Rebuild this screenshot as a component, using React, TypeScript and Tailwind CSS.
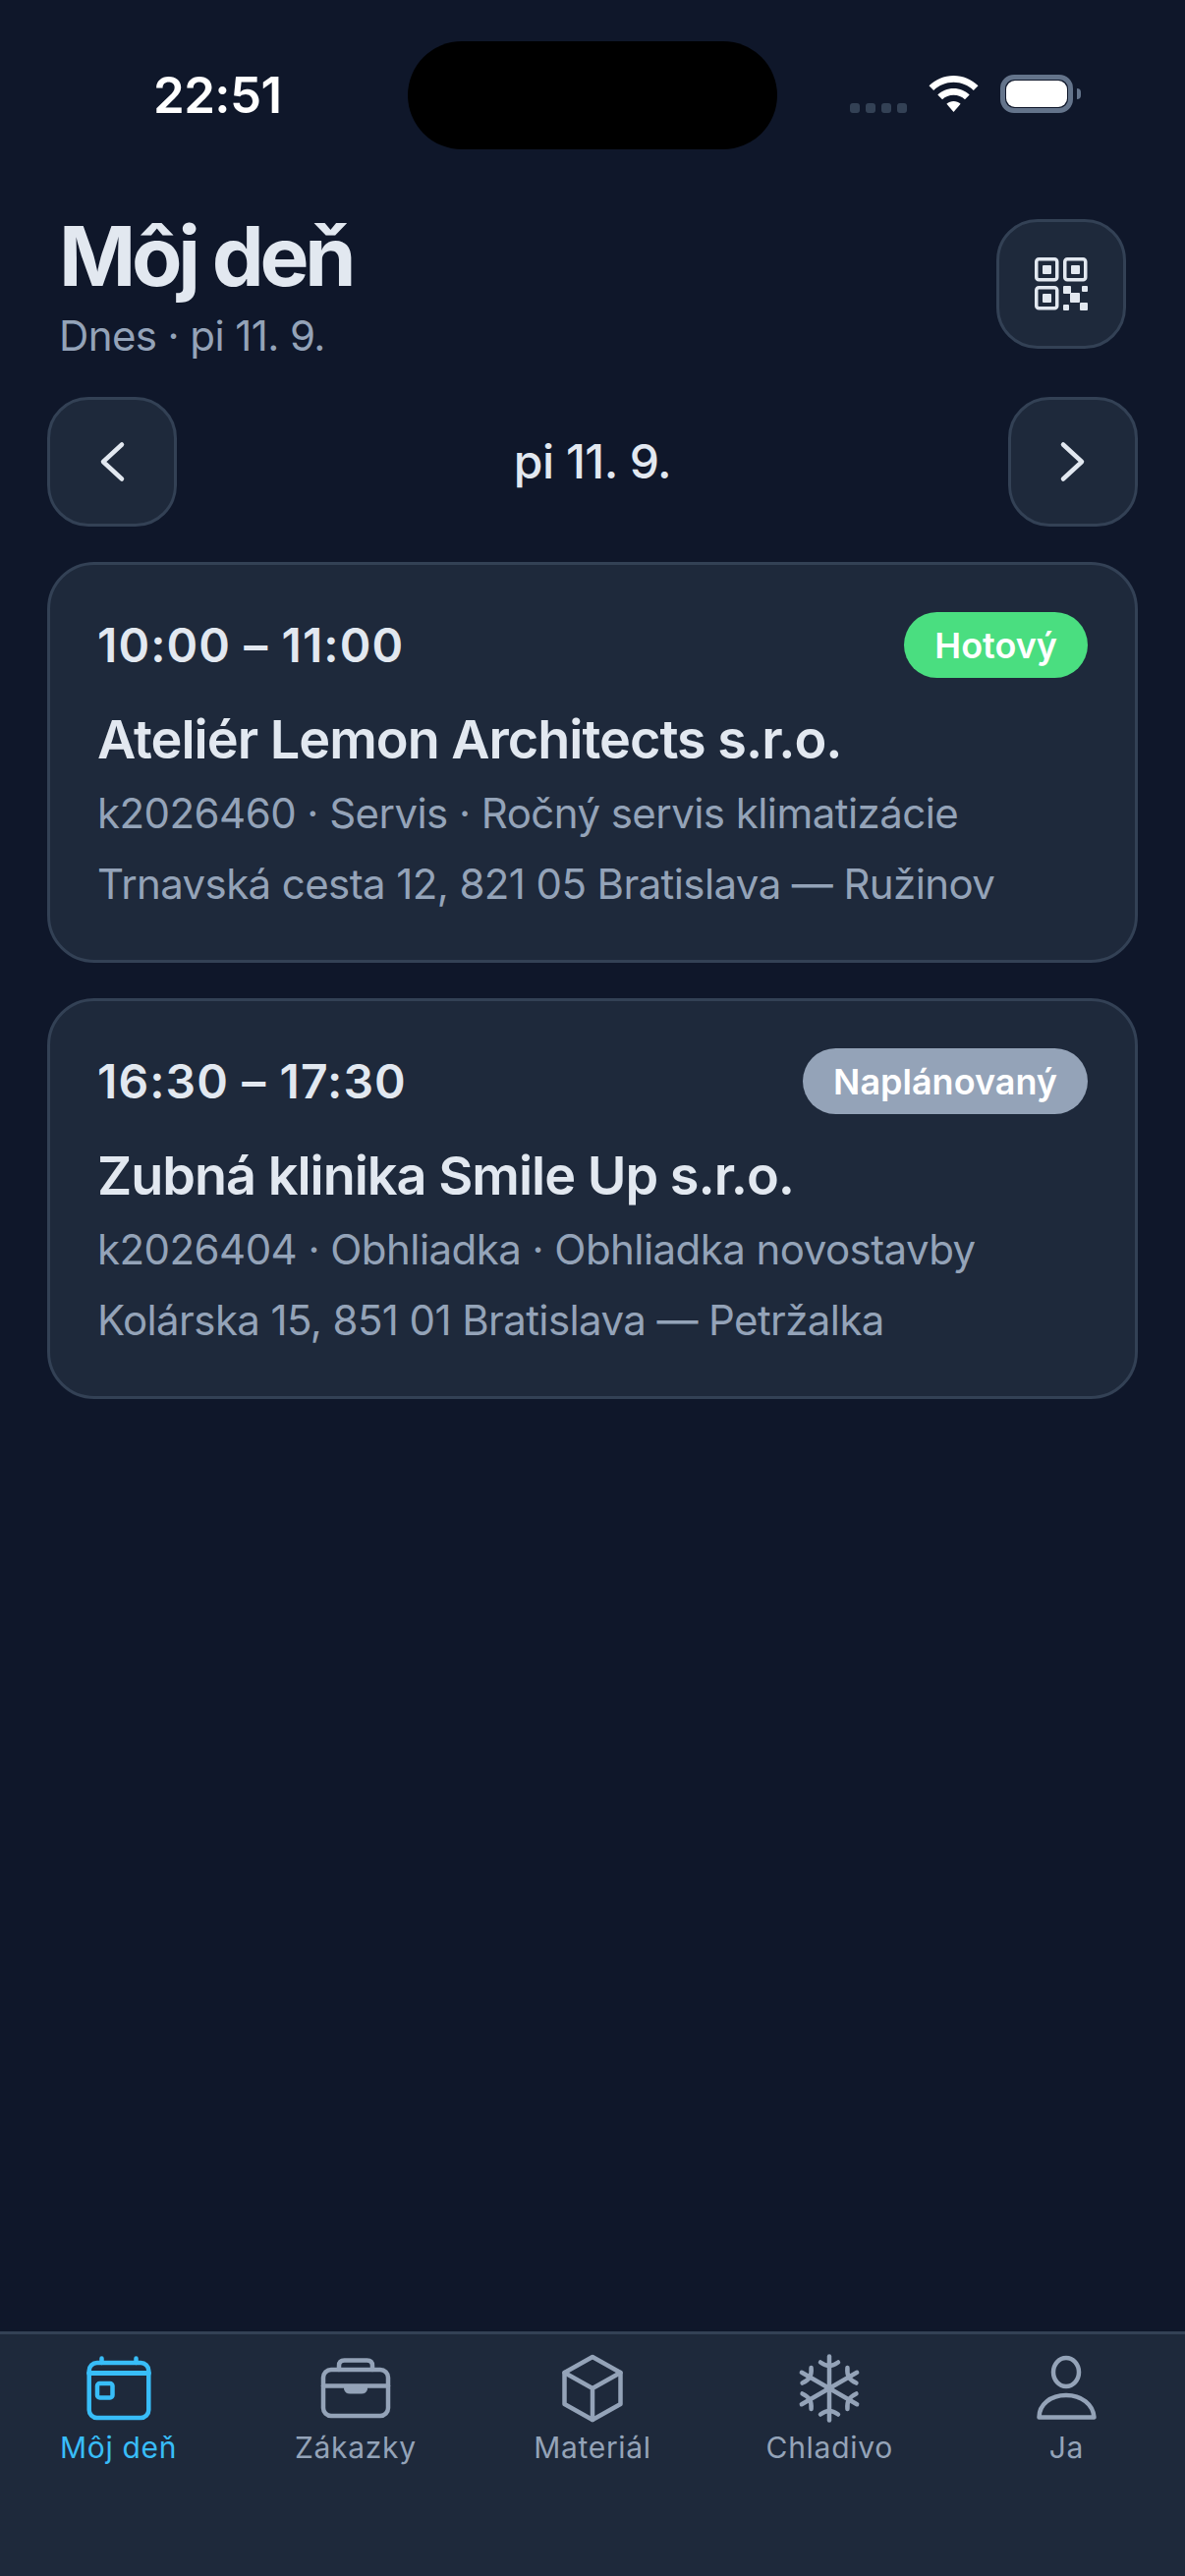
const jobs = [
  {
    time: '10:00 – 11:00',
    status: 'Hotový',
    statusClass: 'bg-[#4ade80]',
    name: 'Ateliér Lemon Architects s.r.o.',
    meta: 'k2026460 · Servis · Ročný servis klimatizácie',
    address: 'Trnavská cesta 12, 821 05 Bratislava — Ružinov',
  },
  {
    time: '16:30 – 17:30',
    status: 'Naplánovaný',
    statusClass: 'bg-[#94a3b8]',
    name: 'Zubná klinika Smile Up s.r.o.',
    meta: 'k2026404 · Obhliadka · Obhliadka novostavby',
    address: 'Kolárska 15, 851 01 Bratislava — Petržalka',
  },
];

function Icon({ children }: { children: React.ReactNode }) {
  return (
    <svg
      width="72"
      height="72"
      viewBox="0 0 72 72"
      fill="none"
      stroke="currentColor"
      strokeWidth="4.5"
      strokeLinecap="round"
      strokeLinejoin="round"
    >
      {children}
    </svg>
  );
}

function CalendarIcon() {
  return (
    <Icon>
      <rect x="5.7" y="10" width="60.6" height="56" rx="8" />
      <path d="M5.7 20.5H66.3" strokeWidth="5" />
      <path d="M18.5 5.5V10M53.5 5.5V10" />
      <rect x="14" y="31" width="15.5" height="14.5" rx="2.5" />
    </Icon>
  );
}

function BriefcaseIcon() {
  return (
    <Icon>
      <rect x="3" y="17" width="66" height="47" rx="8" />
      <path d="M19 17V13C19 9.5 21 7.5 24.5 7.5H47.5C51 7.5 53 9.5 53 13V17" />
      <path d="M3 33.5H69" />
      <path d="M24.5 33.5H47.5V36C47.5 39 45.5 41 42.5 41H29.5C26.5 41 24.5 39 24.5 36Z" fill="currentColor" strokeWidth="1" />
    </Icon>
  );
}

function CubeIcon() {
  return (
    <Icon>
      <path d="M36 4L64.5 20V52L36 68L7.5 52V20Z" />
      <path d="M7.5 20L36 36L64.5 20M36 36V68" />
    </Icon>
  );
}

function SnowflakeIcon() {
  return (
    <Icon>
      {[0, 60, 120, 180, 240, 300].map((angle) => (
        <g key={angle} transform={`rotate(${angle} 36 36)`}>
          <path d="M36 36V3.5" />
          <path d="M27 9.5C30.5 12 33 13 36 13C39 13 41.5 12 45 9.5" />
        </g>
      ))}
    </Icon>
  );
}

function PersonIcon() {
  return (
    <Icon>
      <ellipse cx="36" cy="19.5" rx="13" ry="14.5" />
      <path d="M8.5 65.5C8.5 52 20.5 43 36 43C51.5 43 63.5 52 64.5 65.5Z" />
    </Icon>
  );
}

function NavButton({ children }: { children: React.ReactNode }) {
  return (
    <button className="flex h-[132px] w-[132px] items-center justify-center rounded-[42px] border-[3px] border-[#334155] bg-[#1e293b] text-[#e2e8f0]">
      {children}
    </button>
  );
}

function QrIcon() {
  return (
    <svg width="54" height="54" viewBox="0 0 54 54" fill="none">
      <g stroke="#e2e8f0" strokeWidth="3.5">
        <rect x="1.75" y="1.75" width="21" height="21" rx="2.5" />
        <rect x="30.75" y="1.75" width="21" height="21" rx="2.5" />
        <rect x="1.75" y="30.75" width="21" height="21" rx="2.5" />
      </g>
      <g fill="#e2e8f0">
        <rect x="8" y="8" width="9" height="9" rx="1" />
        <rect x="37" y="8" width="9" height="9" rx="1" />
        <rect x="8" y="37" width="9" height="9" rx="1" />
        <rect x="29" y="29" width="8" height="8" rx="1" />
        <rect x="48" y="29" width="6" height="6" rx="1" />
        <rect x="36" y="36" width="10" height="10" rx="1" />
        <rect x="29" y="48" width="6" height="6" rx="1" />
        <rect x="46" y="46" width="8" height="8" rx="1" />
      </g>
    </svg>
  );
}

const tabs = [
  { label: 'Môj deň', icon: <CalendarIcon />, active: true },
  { label: 'Zákazky', icon: <BriefcaseIcon /> },
  { label: 'Materiál', icon: <CubeIcon /> },
  { label: 'Chladivo', icon: <SnowflakeIcon /> },
  { label: 'Ja', icon: <PersonIcon /> },
];

export default function App() {
  return (
    <div className="flex h-[2622px] w-[1206px] flex-col overflow-hidden bg-[#0f172a] font-['Inter',sans-serif] antialiased">
      {/* Status bar */}
      <div className="flex h-[110px] mt-[42px] items-center">
        <div className="w-[415px] pl-[156px] text-[51px] leading-[60px] font-semibold tracking-[-0.6px] text-white">22:51</div>
        <div className="h-[110px] w-[376px] rounded-full bg-black"></div>
        <div className="flex flex-1 items-center">
          <div className="ml-[74px] mt-[26px] flex gap-[6px]">
            <div className="h-[10px] w-[10px] rounded-[3px] bg-[#334155]"></div>
            <div className="h-[10px] w-[10px] rounded-[3px] bg-[#334155]"></div>
            <div className="h-[10px] w-[10px] rounded-[3px] bg-[#334155]"></div>
            <div className="h-[10px] w-[10px] rounded-[3px] bg-[#334155]"></div>
          </div>
          <svg className="ml-[22px] -mt-[4px]" width="51" height="37" viewBox="0 0 51 37" fill="white">
            <path d="M25.5 0C15.8 0 7.2 3.8 0.5 10.2L5.2 15C10.7 9.8 17.7 6.8 25.5 6.8C33.3 6.8 40.3 9.8 45.8 15L50.5 10.2C43.8 3.8 35.2 0 25.5 0Z" />
            <path d="M25.5 13C19.2 13 13.6 15.5 9.3 19.4L14 24.2C17 21.5 21 19.8 25.5 19.8C30 19.8 34 21.5 37 24.2L41.7 19.4C37.4 15.5 31.8 13 25.5 13Z" />
            <path d="M25.5 26C23 26 20.5 27 18.4 28.8L25.5 37L32.6 28.8C30.5 27 28 26 25.5 26Z" />
          </svg>
          <div className="ml-[22px] -mt-[4px] flex items-center">
            <div className="h-[39px] w-[74px] rounded-[14px] border-[5px] border-[#64748b] p-[1px]">
              <div className="h-full w-full rounded-[9px] bg-white"></div>
            </div>
            <div className="ml-[4px] h-[11px] w-[4px] rounded-r-full bg-[#64748b]"></div>
          </div>
        </div>
      </div>

      {/* Header */}
      <div className="mt-[71px] flex items-start justify-between px-[60px]">
        <div>
          <h1 className="text-[84px] leading-[76px] font-bold tracking-[-4.2px] text-[#e2e8f0]">Môj deň</h1>
          <p className="mt-[16px] text-[42px] leading-[54px] tracking-[-0.6px] text-[#94a3b8]">Dnes · pi 11. 9.</p>
        </div>
        <NavButton>
          <QrIcon />
        </NavButton>
      </div>

      {/* Day switch */}
      <div className="mt-[35px] flex items-center justify-between px-[48px]">
        <NavButton>
          <svg width="48" height="48" viewBox="0 0 48 48" fill="none" stroke="currentColor" strokeWidth="4.5" strokeLinecap="round" strokeLinejoin="round">
            <path d="M34 6.5L15 24L34 41.5" />
          </svg>
        </NavButton>
        <div className="text-[48px] font-medium tracking-[-0.5px] text-[#e2e8f0]">pi 11. 9.</div>
        <NavButton>
          <svg width="48" height="48" viewBox="0 0 48 48" fill="none" stroke="currentColor" strokeWidth="4.5" strokeLinecap="round" strokeLinejoin="round">
            <path d="M14 6.5L33 24L14 41.5" />
          </svg>
        </NavButton>
      </div>

      {/* Jobs */}
      <div className="mt-[36px] flex flex-col gap-[36px] px-[48px]">
        {jobs.map((job) => (
          <div key={job.meta} className="h-[408px] rounded-[48px] border-[3px] border-[#334155] bg-[#1e293b] p-[48px]">
            <div className="flex items-center justify-between">
              <div className="text-[48px] leading-[60px] font-semibold tracking-[1.1px] text-[#e2e8f0]">{job.time}</div>
              <div className={`flex h-[67px] items-center rounded-full px-[31px] text-[36px] font-semibold text-white ${job.statusClass}`}>{job.status}</div>
            </div>
            <div className="mt-[30px] text-[54px] leading-[66px] font-semibold tracking-[-1px] text-[#e2e8f0]">{job.name}</div>
            <div className="mt-[12px] text-[42px] leading-[60px] tracking-[-0.55px] text-[#94a3b8]">{job.meta}</div>
            <div className="mt-[12px] text-[42px] leading-[60px] tracking-[-0.6px] text-[#94a3b8]">{job.address}</div>
          </div>
        ))}
      </div>

      {/* Tabs */}
      <div className="mt-auto grid h-[249px] grid-cols-5 border-t-[3px] border-[#334155] bg-[#1e293b] pt-[19px]">
        {tabs.map((tab) => (
          <div key={tab.label} className={`flex flex-col items-center ${tab.active ? 'text-[#38bdf8]' : 'text-[#94a3b8]'}`}>
            {tab.icon}
            <span className="mt-[6px] text-[30px] leading-[36px] font-normal tracking-[0.7px]">{tab.label}</span>
          </div>
        ))}
      </div>
    </div>
  );
}
